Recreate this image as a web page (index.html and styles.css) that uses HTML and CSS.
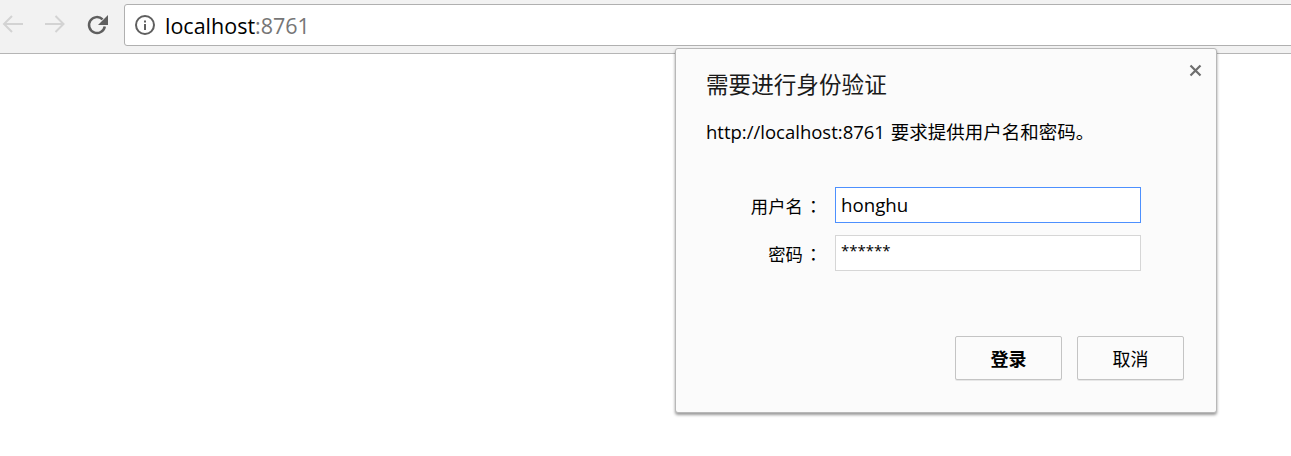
FILE: index.html
```html
<!DOCTYPE html>
<html lang="zh-CN">
<head>
  <meta charset="UTF-8" />
  <title>localhost:8761</title>
  <link rel="stylesheet" href="styles.css">
</head>
<body>
  <div class="toolbar">
    <div class="nav-buttons">
      <svg class="nav-icon" viewBox="0 0 24 24"><path d="M22 11H3.500M11 3L3 11l8 8" class="nav-off"/></svg>
      <svg class="nav-icon" viewBox="0 0 24 24"><path d="M2 11h18.500M12.500 3l8 8-8 8" class="nav-off"/></svg>
      <svg class="nav-icon" viewBox="0 0 24 24"><path d="M19.800 13.500A7.950 7.950 0 1 1 17.600 6.400" class="nav-reload"/><path d="M23 2v10H13z" class="nav-arrow"/></svg>
    </div>
    <div class="address-bar">
      <svg class="info-icon" viewBox="0 0 20 20">
        <circle cx="10" cy="10" r="9" class="info-ring"/>
        <rect x="9" y="9" width="2" height="6" class="info-dot"/>
        <rect x="9" y="5.500" width="2" height="2" class="info-dot"/>
      </svg>
      <span class="host">localhost</span><span class="port">:8761</span>
    </div>
  </div>

  <div class="auth-dialog">
    <span class="close-btn">
      <svg viewBox="0 0 13 13"><path d="M1.500 1.500l10 10M11.500 1.500l-10 10"/></svg>
    </span>
    <h1 class="dialog-title">需要进行身份验证</h1>
    <p class="dialog-text">http://localhost:8761 要求提供用户名和密码。</p>
    <div class="form-rows">
      <label class="form-label">用户名<span class="colon" lang="zh-TW">：</span></label>
      <div class="field field-focus">honghu</div>
      <label class="form-label">密码<span class="colon" lang="zh-TW">：</span></label>
      <div class="field field-pass">******</div>
    </div>
    <div class="dialog-buttons">
      <button class="btn btn-primary">登录</button>
      <button class="btn">取消</button>
    </div>
  </div>
</body>
</html>
```

FILE: styles.css
```css
body {
  margin: 0;
  height: 456px;
  overflow: hidden;
  background: #ffffff;
  color: #000000;
  font-family: "Open Sans", "Noto Sans CJK SC", sans-serif;
  position: relative;
}

.toolbar {
  display: flex;
  align-items: flex-start;
  height: 54px;
  padding-top: 4px;
  box-sizing: border-box;
  background: #f2f2f2;
  border-bottom: 1px solid #b5b5b5;
}

.nav-buttons {
  display: flex;
  gap: 18px;
  width: 124px;
  flex-shrink: 0;
  padding-top: 9px;
  padding-left: 1px;
  box-sizing: border-box;
}

.nav-icon {
  width: 24px;
  height: 24px;
  flex-shrink: 0;
}

.nav-off {
  fill: none;
  stroke: #d3d3d3;
  stroke-width: 2;
}

.nav-reload {
  fill: none;
  stroke: #5f5f5f;
  stroke-width: 2.500;
}

.nav-arrow {
  fill: #5f5f5f;
}

.address-bar {
  flex: 1;
  display: flex;
  align-items: center;
  height: 42px;
  margin-right: -10px;
  padding-left: 10px;
  box-sizing: border-box;
  background: #ffffff;
  border: 1px solid #b0b0b0;
  border-radius: 3px;
  font-size: 21.5px;
}

.info-icon {
  width: 20px;
  height: 20px;
  margin-right: 10px;
}

.info-ring {
  fill: none;
  stroke: #5f5f5f;
  stroke-width: 2;
}

.info-dot {
  fill: #5f5f5f;
}

.host {
  color: #000000;
}

.port {
  color: #767676;
}

.auth-dialog {
  position: absolute;
  left: 675px;
  top: 48px;
  width: 542px;
  height: 365px;
  box-sizing: border-box;
  padding: 21px 32px 0 30px;
  background: #fbfbfb;
  border: 1px solid #b8b8b8;
  border-radius: 3px;
  box-shadow: 0 2px 3px rgba(0, 0, 0, 0.4);
}

.close-btn {
  position: absolute;
  right: 14px;
  top: 15px;
  width: 13px;
  height: 13px;
}

.close-btn svg {
  display: block;
  fill: none;
  stroke: #6e6e6e;
  stroke-width: 2.200;
}

.dialog-title {
  margin: 0;
  font-size: 22.6px;
  font-weight: 400;
  line-height: 30px;
  color: #1a1a1a;
}

.dialog-text {
  margin: 20px 0 0;
  font-size: 18.5px;
  line-height: 24px;
  word-spacing: 1px;
}

.form-rows {
  display: grid;
  grid-template-columns: 116px 306px;
  column-gap: 13px;
  row-gap: 12px;
  margin-top: 43px;
  align-items: center;
}

.form-label {
  font-size: 17.3px;
  text-align: right;
}

.colon {
  margin-left: 2px;
  font-family: "Noto Sans CJK TC", sans-serif;
}

.field {
  height: 36px;
  box-sizing: border-box;
  padding-left: 5px;
  background: #ffffff;
  border: 1px solid #d6d6d6;
  font-size: 18.7px;
  line-height: 34px;
}

.field-focus {
  border-color: #4d90fe;
}

.field-pass {
  font-size: 15px;
  line-height: 28px;
}

.dialog-buttons {
  display: flex;
  justify-content: flex-end;
  gap: 15px;
  margin-top: 65px;
}

.btn {
  width: 107px;
  height: 44px;
  background: #fbfbfb;
  border: 1px solid #c4c4c4;
  border-radius: 2px;
  font-family: inherit;
  font-size: 18px;
  color: #000000;
  box-shadow: 0 1px 0 rgba(0, 0, 0, 0.08);
}

.btn-primary {
  font-weight: 700;
}
```
